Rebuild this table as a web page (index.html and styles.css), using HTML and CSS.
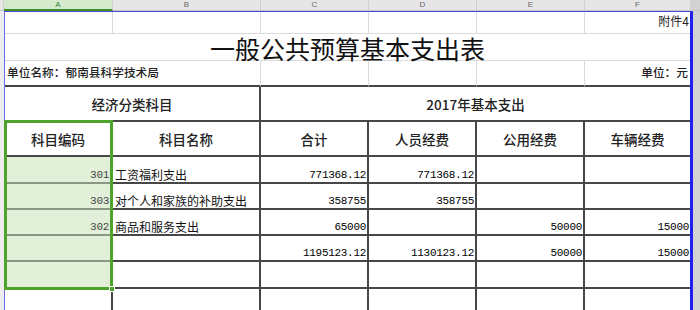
FILE: index.html
```html
<!DOCTYPE html>
<html lang="zh-CN">
<head>
<meta charset="utf-8">
<link rel="stylesheet" href="styles.css">
</head>
<body>
<div class="app">
  <div class="colhead">
    <div class="ch gut"></div>
    <div class="ch ch-a sel">A</div>
    <div class="ch ch-b">B</div>
    <div class="ch ch-c">C</div>
    <div class="ch ch-d">D</div>
    <div class="ch ch-e">E</div>
    <div class="ch ch-f">F</div>
    <div class="ch rest"></div>
  </div>
  <div class="main">
    <div class="rowgut"></div>
    <div class="frame">
      <div class="grid">
        <!-- row 1 -->
        <div class="c lt"></div>
        <div class="c lt"></div>
        <div class="c lt"></div>
        <div class="c lt"></div>
        <div class="c lt"></div>
        <div class="c lt last right note">附件4</div>
        <!-- row 2 -->
        <div class="c lt last span6 title">一般公共预算基本支出表</div>
        <!-- row 3 -->
        <div class="c lt dkb span2 unit">单位名称：郁南县科学技术局</div>
        <div class="c lt dkb"></div>
        <div class="c lt dkb"></div>
        <div class="c lt dkb"></div>
        <div class="c lt dkb last right unit">单位：元</div>
        <!-- row 4 -->
        <div class="c dk span2 head">经济分类科目</div>
        <div class="c dk last span4 head">2017年基本支出</div>
        <!-- row 5 -->
        <div class="c dk head">科目编码</div>
        <div class="c dk head">科目名称</div>
        <div class="c dk head">合计</div>
        <div class="c dk head">人员经费</div>
        <div class="c dk head">公用经费</div>
        <div class="c dk last head">车辆经费</div>
        <!-- row 6 -->
        <div class="c dk gr num code">301</div>
        <div class="c dk txt">工资福利支出</div>
        <div class="c dk num">771368.12</div>
        <div class="c dk num">771368.12</div>
        <div class="c dk num"></div>
        <div class="c dk last num"></div>
        <!-- row 7 -->
        <div class="c dk gr num code">303</div>
        <div class="c dk txt">对个人和家族的补助支出</div>
        <div class="c dk num">358755</div>
        <div class="c dk num">358755</div>
        <div class="c dk num"></div>
        <div class="c dk last num"></div>
        <!-- row 8 -->
        <div class="c dk gr num code">302</div>
        <div class="c dk txt">商品和服务支出</div>
        <div class="c dk num">65000</div>
        <div class="c dk num"></div>
        <div class="c dk num">50000</div>
        <div class="c dk last num">15000</div>
        <!-- row 9 -->
        <div class="c dk gr num code"></div>
        <div class="c dk txt"></div>
        <div class="c dk num">1195123.12</div>
        <div class="c dk num">1130123.12</div>
        <div class="c dk num">50000</div>
        <div class="c dk last num">15000</div>
        <!-- row 10 -->
        <div class="c dk gr"></div>
        <div class="c dk"></div>
        <div class="c dk"></div>
        <div class="c dk"></div>
        <div class="c dk"></div>
        <div class="c dk last"></div>
        <!-- row 11 -->
        <div class="c dk"></div>
        <div class="c dk"></div>
        <div class="c dk"></div>
        <div class="c dk"></div>
        <div class="c dk"></div>
        <div class="c dk last"></div>
      </div>
    </div>
    <div class="restcol"></div>
    <div class="selection"><span class="handle"></span></div>
  </div>
</div>
</body>
</html>
```
FILE: styles.css
```css
* { box-sizing: border-box; }
html, body { margin: 0; padding: 0; background: #fff; }
body {
  width: 700px;
  height: 310px;
  overflow: hidden;
  font-family: "Noto Sans CJK SC", "Liberation Sans", sans-serif;
  color: #111;
}
.app { width: 700px; height: 310px; display: flex; flex-direction: column; }

.colhead {
  display: flex;
  height: 11px;
  background: #e6e6e6;
  flex: none;
}
.ch {
  height: 11px;
  border-right: 1px solid #cfcfcf;
  border-bottom: 1px solid #c4c4c4;
  font-family: "Liberation Sans", sans-serif;
  font-size: 8px;
  line-height: 9px;
  text-align: center;
  color: #666;
  overflow: hidden;
}
.gut { width: 4px; }
.ch-a { width: 109px; }
.ch-b { width: 148px; }
.ch-c { width: 108px; }
.ch-d { width: 108px; }
.ch-e { width: 108px; }
.ch-f { width: 106px; }
.rest { flex: 1; background: #d2d2d2; border-right: none; }
.ch.sel {
  background: #d5e9cd;
  color: #2f8a2f;
  border-bottom: 2px solid #3f8f2a;
}

.main { position: relative; display: flex; flex: 1; }
.rowgut { width: 4px; background: #ededed; flex: none; }
.frame {
  width: 689px;
  flex: none;
  border-left: 1px solid #6d6de6;
  border-top: 1px solid #4a4ae0;
  border-right: 3px solid #1f1ff0;
}
.restcol { flex: 1; background: #d2d2d2; }

.grid {
  display: grid;
  grid-template-columns: 108px 148px 108px 108px 108px 105px;
  grid-template-rows: 22px 27px 26px 35px 35px 27px 26px 26px 26px 27px 30px;
}
.c {
  display: flex;
  align-items: flex-end;
  overflow: hidden;
  white-space: nowrap;
  font-size: 12px;
}
.lt { border-right: 1px solid #dadada; border-bottom: 1px solid #dadada; }
.dk { border-right: 2px solid #474747; border-bottom: 2px solid #474747; }
.lt.dkb { border-bottom: 2px solid #474747; }
.last { border-right: none; }
.span2 { grid-column: span 2; }
.span4 { grid-column: span 4; }
.span6 { grid-column: span 6; }
.right { justify-content: flex-end; }

.note { font-size: 12px; line-height: 14px; padding: 0 1px 5px 0; color: #222; }
.title {
  justify-content: center;
  align-items: center;
  font-size: 25px;
  line-height: 26px;
  padding-top: 1px;
  overflow: visible;
  color: #111;
}
.unit {
  font-size: 11.7px;
  font-weight: 500;
  line-height: 14px;
  padding: 0 2px 6px 2px;
  color: #222;
}
.head {
  justify-content: center;
  align-items: center;
  font-size: 13.5px;
  font-weight: 500;
  color: #222;
}
.txt { padding: 0 0 0 2px; line-height: 14px; font-size: 12px; color: #111; }
.num {
  justify-content: flex-end;
  font-family: "Liberation Mono", monospace;
  font-size: 11px;
  letter-spacing: -0.3px;
  line-height: 12px;
  padding: 0 1px 1px 0;
  color: #000;
}
.code { color: #444; padding-right: 2px; }
.gr { background: #e2f0da; border-bottom-color: #8a9686; }

.selection {
  position: absolute;
  left: 4px;
  top: 109px;
  width: 109px;
  height: 170px;
  border: 3px solid #4fa22c;
  pointer-events: none;
}
.handle {
  position: absolute;
  right: -5px;
  bottom: -5px;
  width: 6px;
  height: 6px;
  background: #4fa22c;
  border: 1px solid #fff;
}
```
